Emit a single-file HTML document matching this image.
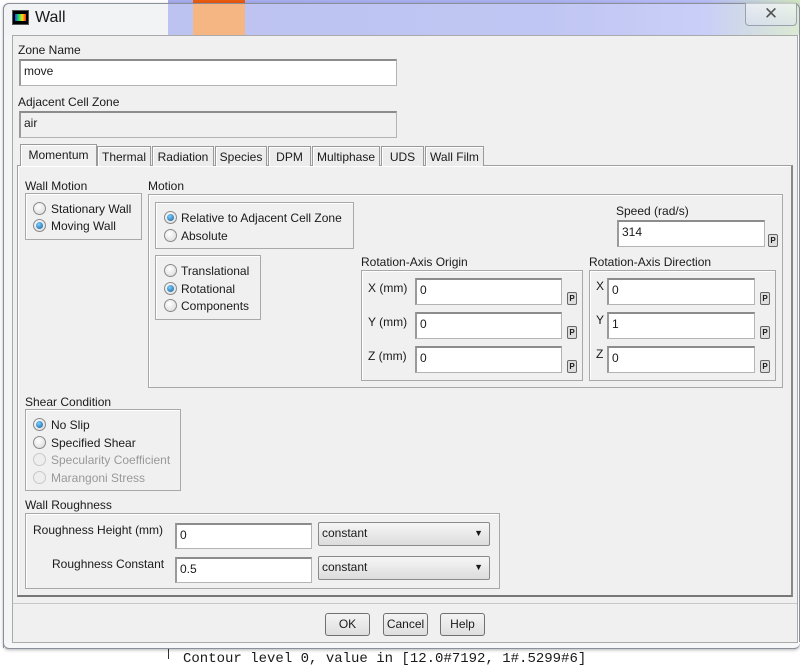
<!DOCTYPE html>
<html><head><style>
*{box-sizing:border-box;margin:0;padding:0}
body{width:800px;height:659px;position:relative;overflow:hidden;background:#fff;font-family:"Liberation Sans",sans-serif;font-size:12px;color:#1a1a1a}
.a{position:absolute}
.lbl{position:absolute;font-size:12px;white-space:nowrap}
.box{position:absolute;border:1px solid #a8a8a8;box-shadow:inset 1px 1px 0 #fff}
.inp{position:absolute;background:#fff;border:1px solid #b4b4b4;border-top:2px solid #8c8c8c;border-left:2px solid #9a9a9a;padding:3px 0 0 3px;font-size:12px}
.p{position:absolute;width:10px;height:13px;border:1px solid #666;border-radius:2px;background:#ddd;font-size:8px;text-align:center;line-height:11px;font-weight:bold}
.r{position:absolute;width:13px;height:13px;border-radius:50%;border:1px solid #8a8a8a;background:radial-gradient(circle at 40% 35%,#fff,#d6d6d6)}
.r.on::after{content:"";position:absolute;left:2px;top:2px;width:7px;height:7px;border-radius:50%;background:radial-gradient(circle at 40% 35%,#7fd0ff,#0a5a9a)}
.r.dis{border-color:#c8c8c8;background:#eee}
.rt{position:absolute;font-size:12px;white-space:nowrap}
.tab{position:absolute;top:146px;height:20px;border:1px solid #9a9a9a;border-bottom:none;background:#ececec;font-size:12px;text-align:center;line-height:20px;box-shadow:inset 1px 1px 0 #fff}
.cb{position:absolute;border:1px solid #8a8a8a;border-radius:2px;background:linear-gradient(#f6f6f6,#dcdcdc);font-size:12px;padding:3px 0 0 3px}
.cb::after{content:"▼";position:absolute;right:6px;top:5px;font-size:9px}
.btn{position:absolute;top:613px;height:23px;border:1px solid #707070;border-radius:3px;background:linear-gradient(#f4f4f4,#dedede);text-align:center;line-height:21px;font-size:12px}
</style></head><body>
<!-- background -->
<div class="a" style="left:168px;top:0;width:632px;height:35px;background:linear-gradient(90deg,#a5acec,#aab1ef 60%,#b6bdf6 85%,#d0e4c0)"></div>
<div class="a" style="left:193px;top:0;width:52px;height:35px;background:linear-gradient(#e85a10 0 3px,#f59a50 3px)"></div>
<div class="a" style="left:168px;top:645px;width:1px;height:14px;background:#333"></div>
<div class="lbl" style="left:183px;top:651px;font-family:'Liberation Mono',monospace;font-size:14px">Contour level 0, value in [12.0#7192, 1#.5299#6]</div>
<!-- window frame -->
<div class="a" style="left:3px;top:3px;width:797px;height:646px;border-radius:6px;background:rgba(245,247,252,0.3);border:1px solid #8a8f9a;box-shadow:0 1px 3px rgba(0,0,0,.3)"></div>
<div class="a" style="left:3px;top:3px;width:165px;height:32px;background:#f2f3f5;border-radius:6px 0 0 0;border-left:1px solid #8a8f9a;border-top:1px solid #8a8f9a"></div>
<div class="a" style="left:3px;top:35px;width:9px;height:613px;background:#f4f5f7;border-left:1px solid #8a8f9a"></div>
<div class="a" style="left:3px;top:642px;width:797px;height:7px;background:#f6f7f9;border-bottom:1px solid #8a8f9a;border-left:1px solid #8a8f9a;border-radius:0 0 6px 6px"></div>
<div class="a" style="left:12px;top:10px;width:17px;height:15px;background:#000;border:1px solid #555"><div class="a" style="left:2px;top:3px;width:11px;height:7px;background:linear-gradient(90deg,#1a3cff,#20e060,#f0e020,#ff3010)"></div></div>
<div class="lbl" style="left:35px;top:9px;font-size:16px">Wall</div>
<div class="a" style="left:745px;top:3px;width:52px;height:23px;border:1px solid #9aa0b0;border-top:none;border-radius:0 0 4px 4px;background:linear-gradient(rgba(255,255,255,.5),rgba(220,225,240,.5));text-align:center;font-size:17px;line-height:22px;color:#555">✕</div>
<!-- client -->
<div class="a" style="left:12px;top:35px;width:786px;height:608px;background:#f0f0f0;border:1px solid #aaa"></div>
<div class="lbl" style="left:18px;top:43px">Zone Name</div>
<div class="inp" style="left:19px;top:59px;width:378px;height:27px">move</div>
<div class="lbl" style="left:18px;top:95px">Adjacent Cell Zone</div>
<div class="inp" style="left:19px;top:111px;width:378px;height:27px;background:#f0f0f0">air</div>
<!-- tab panel -->
<div class="a" style="left:17px;top:165px;width:776px;height:432px;border:1px solid #a0a0a0;border-right:2px solid #888;border-bottom:2px solid #777;box-shadow:inset 1px 1px 0 #fff"></div>
<div class="tab" style="left:20px;top:144px;width:77px;height:22px;background:#f0f0f0">Momentum</div>
<div class="tab" style="left:97px;width:54px">Thermal</div>
<div class="tab" style="left:152px;width:62px">Radiation</div>
<div class="tab" style="left:215px;width:52px">Species</div>
<div class="tab" style="left:268px;width:43px">DPM</div>
<div class="tab" style="left:312px;width:68px">Multiphase</div>
<div class="tab" style="left:381px;width:43px">UDS</div>
<div class="tab" style="left:425px;width:59px">Wall Film</div>
<!-- wall motion -->
<div class="lbl" style="left:25px;top:179px">Wall Motion</div>
<div class="box" style="left:25px;top:193px;width:117px;height:47px"></div>
<div class="r" style="left:33px;top:202px"></div><div class="rt" style="left:51px;top:202px">Stationary Wall</div>
<div class="r on" style="left:33px;top:219px"></div><div class="rt" style="left:51px;top:219px">Moving Wall</div>
<!-- motion -->
<div class="lbl" style="left:148px;top:179px">Motion</div>
<div class="box" style="left:148px;top:194px;width:635px;height:194px"></div>
<div class="box" style="left:155px;top:202px;width:199px;height:47px"></div>
<div class="r on" style="left:164px;top:211px"></div><div class="rt" style="left:181px;top:211px">Relative to Adjacent Cell Zone</div>
<div class="r" style="left:164px;top:229px"></div><div class="rt" style="left:181px;top:229px">Absolute</div>
<div class="box" style="left:155px;top:255px;width:106px;height:65px"></div>
<div class="r" style="left:164px;top:264px"></div><div class="rt" style="left:181px;top:264px">Translational</div>
<div class="r on" style="left:164px;top:282px"></div><div class="rt" style="left:181px;top:282px">Rotational</div>
<div class="r" style="left:164px;top:299px"></div><div class="rt" style="left:181px;top:299px">Components</div>
<div class="lbl" style="left:616px;top:204px">Speed (rad/s)</div>
<div class="inp" style="left:617px;top:220px;width:148px;height:27px">314</div>
<div class="p" style="left:768px;top:234px">P</div>
<div class="lbl" style="left:361px;top:255px">Rotation-Axis Origin</div>
<div class="box" style="left:361px;top:270px;width:222px;height:111px"></div>
<div class="lbl" style="left:368px;top:281px">X (mm)</div><div class="inp" style="left:415px;top:278px;width:147px;height:27px">0</div><div class="p" style="left:567px;top:292px">P</div>
<div class="lbl" style="left:368px;top:315px">Y (mm)</div><div class="inp" style="left:415px;top:312px;width:147px;height:27px">0</div><div class="p" style="left:567px;top:326px">P</div>
<div class="lbl" style="left:368px;top:349px">Z (mm)</div><div class="inp" style="left:415px;top:346px;width:147px;height:27px">0</div><div class="p" style="left:567px;top:360px">P</div>
<div class="lbl" style="left:589px;top:255px">Rotation-Axis Direction</div>
<div class="box" style="left:589px;top:270px;width:187px;height:111px"></div>
<div class="lbl" style="left:596px;top:279px">X</div><div class="inp" style="left:607px;top:278px;width:148px;height:27px">0</div><div class="p" style="left:760px;top:292px">P</div>
<div class="lbl" style="left:596px;top:313px">Y</div><div class="inp" style="left:607px;top:312px;width:148px;height:27px">1</div><div class="p" style="left:760px;top:326px">P</div>
<div class="lbl" style="left:596px;top:347px">Z</div><div class="inp" style="left:607px;top:346px;width:148px;height:27px">0</div><div class="p" style="left:760px;top:360px">P</div>
<!-- shear -->
<div class="lbl" style="left:25px;top:395px">Shear Condition</div>
<div class="box" style="left:25px;top:409px;width:156px;height:82px"></div>
<div class="r on" style="left:33px;top:418px"></div><div class="rt" style="left:51px;top:418px">No Slip</div>
<div class="r" style="left:33px;top:436px"></div><div class="rt" style="left:51px;top:436px">Specified Shear</div>
<div class="r dis" style="left:33px;top:453px"></div><div class="rt" style="left:51px;top:453px;color:#999">Specularity Coefficient</div>
<div class="r dis" style="left:33px;top:471px"></div><div class="rt" style="left:51px;top:471px;color:#999">Marangoni Stress</div>
<!-- roughness -->
<div class="lbl" style="left:25px;top:498px">Wall Roughness</div>
<div class="box" style="left:25px;top:513px;width:475px;height:76px"></div>
<div class="lbl" style="left:33px;top:523px">Roughness Height (mm)</div>
<div class="inp" style="left:175px;top:523px;width:137px;height:26px">0</div>
<div class="cb" style="left:318px;top:522px;width:172px;height:24px">constant</div>
<div class="lbl" style="left:52px;top:557px">Roughness Constant</div>
<div class="inp" style="left:175px;top:557px;width:137px;height:26px">0.5</div>
<div class="cb" style="left:318px;top:556px;width:172px;height:24px">constant</div>
<!-- bottom -->
<div class="a" style="left:13px;top:603px;width:784px;height:1px;background:#c8c8c8"></div>
<div class="btn" style="left:325px;width:45px">OK</div>
<div class="btn" style="left:383px;width:45px">Cancel</div>
<div class="btn" style="left:440px;width:45px">Help</div>
</body></html>
